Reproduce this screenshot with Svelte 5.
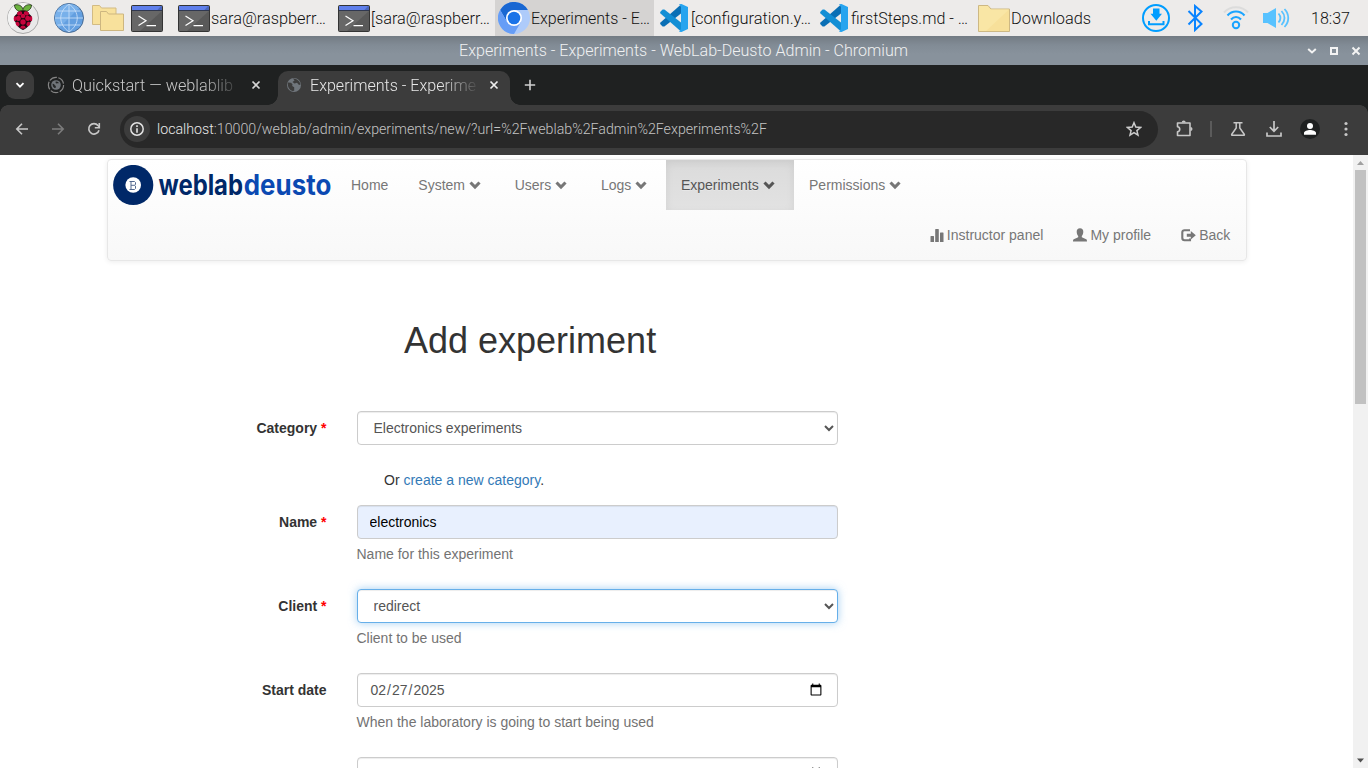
<script>
  const tasks = [
    { icon: 'term', label: 'sara@raspberr…', w: 115 },
    { icon: 'term', label: '[sara@raspberr…', w: 119 },
    { icon: 'chromium', label: 'Experiments - E…', w: 119, active: true },
    { icon: 'code', label: '[configuration.y…', w: 120 },
    { icon: 'code', label: 'firstSteps.md - …', w: 117 },
    { icon: 'folder', label: 'Downloads', w: 80 }
  ];
  const nav = [
    { label: 'Home' },
    { label: 'System', menu: true },
    { label: 'Users', menu: true },
    { label: 'Logs', menu: true },
    { label: 'Experiments', menu: true, active: true },
    { label: 'Permissions', menu: true }
  ];
</script>

{#snippet term()}
  <svg width="32" height="28" viewBox="0 0 32 28">
    <rect x=".5" y=".5" width="31" height="26" rx="1" fill="#595959" stroke="#343434" />
    <path d="M1 6h30L9 26H1z" fill="#676767" />
    <rect x="1" y="1" width="30" height="4.5" fill="#4a66bd" />
    <path d="M1 1h29l-4 4.500H1z" fill="#6080ec" />
    <path d="M1 5.500h30" stroke="#303850" />
    <path d="M7.500 11l7.500 4.700-7.500 4.700M15.500 20.700H25" fill="none" stroke="#fff" stroke-width="1.200" />
  </svg>
{/snippet}

{#snippet taskIcon(name)}
  {#if name === 'term'}
    {@render term()}
  {:else if name === 'chromium'}
    <svg width="32" height="32" viewBox="0 0 32 32">
      <circle cx="16" cy="16" r="16" fill="#aecbfa" />
      <path d="M2.140 8A16 16 0 0 1 29.900 8H16z" fill="#1967d2" />
      <path d="M2.140 8L9.100 20 16 8h13.900" fill="#1967d2" />
      <path d="M2.140 8A16 16 0 0 0 16 32l6.900-12-13.800 0z" fill="#669df6" />
      <circle cx="16" cy="16" r="8" fill="#fff" />
      <circle cx="16" cy="16" r="6.300" fill="#1a73e8" />
    </svg>
  {:else if name === 'code'}
    <svg width="32" height="32" viewBox="0 0 32 32">
      <path d="M23 2.500L2.200 20.700v1.400l2.400 2.300 1.800.1L23 11.500z" fill="#0a6fb5" />
      <path d="M23 29.500L2.200 11.300V9.900l2.400-2.300 1.800-.1L23 20.500z" fill="#138fd5" />
      <path d="M21 2.200L23.500 2l6.500 3v22l-6.500 3-2.500-.2L23 27V5z" fill="#27a4ef" />
    </svg>
  {:else}
    <svg width="32" height="28" viewBox="0 0 32 28">
      <path d="M.500 26.500V.500h9.500l3 3.500h18.500v22.500z" fill="#f7e09a" stroke="#cdb883" />
      <path d="M1 1h8.500l3 3.500H31L8 26H1z" fill="#f9e6a5" />
    </svg>
  {/if}
{/snippet}

{#snippet chevron()}
  <svg class="glyph drop" width="14" height="14" viewBox="0 0 14 14"><path d="M1.500 4.500l4.500 4.500 4.500-4.500" fill="none" stroke="currentColor" stroke-width="3.100" /></svg>
{/snippet}

{#snippet earth(cls)}
  <svg class={cls} width="16" height="16" viewBox="0 0 16 16">
    <circle cx="8" cy="8" r="7" fill="#70767c" />
    <path d="M2 5.500l3 .3 1.500 1.500-.3 1.700 2 1.200v3.500L6.500 14C3.500 13 1.300 10 2 5.500zM7 1.500l1.500 2-2 1.500 2 1.500 2.500-.8 2 2.300 1.500-.5C14 4.500 11 1.300 7 1.500z" fill="#3c3c3c" />
  </svg>
{/snippet}

<div class="screen">
  <header class="taskbar">
    <div class="launchers">
      <svg class="menu" width="32" height="32" viewBox="0 0 32 32">
        <circle cx="16" cy="16" r="15.500" fill="#e9e9e9" stroke="#a9a9a9" />
        <path d="M16 .900A15.100 15.100 0 0 0 5 26.500L26.500 5A15 15 0 0 0 16 .900z" fill="#f2f2f2" />
        <path d="M15.500 9.500C12 9.800 7.500 8 7.500 3c4-1 7.500.500 8.500 4.500C17 3.500 20.500 2 24.500 3c0 5-4.500 6.800-8 6.500z" fill="#6cb33f" stroke="#1d2a12" stroke-width=".8" />
        <path d="M16 8.300c3.500 0 5.500 1.600 6.500 4 2.600 1.400 3.600 5.500 1 8-1 3.600-4.500 6.700-7.500 7.700-3-1-6.500-4.100-7.500-7.700-2.600-2.500-1.600-6.600 1-8 1-2.400 3-4 6.500-4z" fill="#1f0710" />
        <g fill="#c7053d">
          <ellipse cx="12.600" cy="11.400" rx="2.700" ry="2" transform="rotate(-25 12.600 11.400)" />
          <ellipse cx="19.400" cy="11.400" rx="2.700" ry="2" transform="rotate(25 19.400 11.400)" />
          <circle cx="16" cy="14" r="2.300" />
          <ellipse cx="11.300" cy="16.300" rx="2.500" ry="2.600" />
          <ellipse cx="20.700" cy="16.300" rx="2.500" ry="2.600" />
          <ellipse cx="7.900" cy="16.700" rx="1.200" ry="2.600" />
          <ellipse cx="24.100" cy="16.700" rx="1.200" ry="2.600" />
          <circle cx="16" cy="20" r="2.700" />
          <ellipse cx="10.600" cy="21.900" rx="1.800" ry="2.300" transform="rotate(-30 10.600 21.900)" />
          <ellipse cx="21.400" cy="21.900" rx="1.800" ry="2.300" transform="rotate(30 21.400 21.900)" />
          <ellipse cx="16" cy="25.200" rx="2.500" ry="1.600" />
        </g>
      </svg>
      <svg class="web" width="30" height="30" viewBox="0 0 30 30">
        <circle cx="15" cy="15" r="14.500" fill="#639fe0" stroke="#4a6b92" />
        <path d="M15 1A14 14 0 0 0 5 25L25 5A14 14 0 0 0 15 1z" fill="#78b0ea" />
        <path d="M15 1v28M1 15h28M3.500 8h23M3.500 22h23M15 1c-11 8-11 20 0 28M15 1c11 8 11 20 0 28" fill="none" stroke="#cfe3fa" stroke-width=".8" />
      </svg>
      <svg class="files" width="32" height="28" viewBox="0 0 32 28">
        <path d="M.500 19.500V.500h7l2 2.500h14.500v16.500z" fill="#f8e19c" stroke="#d2bb84" />
        <path d="M8.500 25.500v-19h6l2 2.500h15v16.500z" fill="#f8e19c" stroke="#cdb680" />
      </svg>
      <div class="shell">{@render term()}</div>
    </div>
    <nav class="tasks">
      {#each tasks as t}
        <div class="task" class:active={t.active}>
          <span class="ticon" class:low={t.icon === 'term' || t.icon === 'folder'}>{@render taskIcon(t.icon)}</span>
          <svg class="ttext" width="122" height="34"><text x="0" y="23" textLength={t.w} lengthAdjust="spacingAndGlyphs">{t.label}</text></svg>
        </div>
      {/each}
    </nav>
    <div class="tray">
      <svg width="28" height="28" viewBox="0 0 28 28">
        <circle cx="14" cy="14" r="13" fill="none" stroke="#009dff" stroke-width="2" />
        <path d="M11 4.500h6.500v5.200h2.500l-5.700 7-5.800-7H11z" fill="#009dff" />
        <path d="M7 17v3.200h14.500V17" fill="none" stroke="#009dff" stroke-width="2" />
      </svg>
      <svg class="bt" width="16" height="28" viewBox="0 0 16 28"><path d="M1.500 7l13 13L8 26V2l6.500 5.500L1.500 20.500" fill="none" stroke="#0a84ff" stroke-width="2" /></svg>
      <svg class="wifi" width="26" height="26" viewBox="0 0 26 26" fill="none">
        <path d="M1 7.500C7 .500 19 .500 25 7.500" stroke="#dcdcdc" stroke-width="2" />
        <path d="M4.500 10.500C9 5 17 5 21.500 10.500M8 14.500c3-3.500 7-3.500 10 0" stroke="#1aa4ff" stroke-width="2" />
        <circle cx="13" cy="20" r="3.200" stroke="#1aa4ff" stroke-width="2" />
      </svg>
      <svg class="vol" width="27" height="22" viewBox="0 0 27 22">
        <path d="M0 6h4.500L13 1v20l-8.500-5H0z" fill="#58c2ff" />
        <path d="M15.500 6.500c2.400 2.800 2.400 6.200 0 9M18.500 4c4 4.200 4 9.800 0 14M21.500 2c5 5.200 5 12.800 0 18" fill="none" stroke="#58c2ff" stroke-width="1.800" />
      </svg>
      <svg class="clock" width="44" height="34"><text x="0" y="23" textLength="39" lengthAdjust="spacingAndGlyphs">18:37</text></svg>
    </div>
  </header>

  <div class="titlebar">
    <svg class="title" width="452" height="29"><text x="1" y="20" textLength="449" lengthAdjust="spacingAndGlyphs">Experiments - Experiments - WebLab-Deusto Admin - Chromium</text></svg>
    <div class="wm">
      <svg width="10" height="10" viewBox="0 0 10 10"><path d="M1.200 3l3.800 3.500L8.800 3" fill="none" stroke="#f3f3f3" stroke-width="2" /></svg>
      <svg width="10" height="10" viewBox="0 0 10 10"><rect x="2" y="2" width="6" height="6" fill="none" stroke="#f3f3f3" stroke-width="2" /></svg>
      <svg width="10" height="10" viewBox="0 0 10 10"><path d="M1.500 1.500l7 7m0-7l-7 7" stroke="#f3f3f3" stroke-width="2" /></svg>
    </div>
  </div>

  <div class="tabstrip">
    <button class="tabsearch" aria-label="Search tabs"><svg width="12" height="12" viewBox="0 0 12 12"><path d="M2.500 4.200L6 7.700l3.500-3.500" fill="none" stroke="#fff" stroke-width="1.800" /></svg></button>
    <div class="tab">
      <svg class="fav" width="18" height="18" viewBox="0 0 18 18">
        <circle cx="9" cy="9" r="7.600" fill="none" stroke="#858585" stroke-width="1.200" stroke-dasharray="8 1.500" />
        <circle cx="9" cy="9" r="4.800" fill="#70757a" />
        <path d="M5.500 7.800l1.500.2.800 1.200 1 .7v1.800L7.500 12 6 10.500zM8.500 5.500l.5.700-.8.600 1.300.8 2-.5.7.8C12 6.500 10.500 5 8.500 5.500z" fill="#252727" />
      </svg>
      <svg class="tabtext dim" width="164" height="28"><text x="0" y="20" textLength="161" lengthAdjust="spacingAndGlyphs">Quickstart — weblablib</text></svg>
      <svg class="x" width="10" height="10" viewBox="0 0 10 10"><path d="M1.500 1.500l7 7m0-7l-7 7" stroke="#d5d5d5" stroke-width="1.700" /></svg>
    </div>
    <div class="tab current">
      {@render earth('fav2')}
      <svg class="tabtext" width="168" height="28"><text x="0" y="20" textLength="166" lengthAdjust="spacingAndGlyphs">Experiments - Experime</text></svg>
      <svg class="x" width="10" height="10" viewBox="0 0 10 10"><path d="M1.500 1.500l7 7m0-7l-7 7" stroke="#eee" stroke-width="1.700" /></svg>
    </div>
    <svg class="plus" width="12" height="12" viewBox="0 0 12 12"><path d="M6 .800v10.400M.800 6h10.400" stroke="#d0d0d0" stroke-width="1.600" /></svg>
  </div>

  <div class="toolbar">
    <svg class="back" width="14" height="14" viewBox="0 0 14 14"><path d="M13 7H2M7 1.800L1.800 7 7 12.200" fill="none" stroke="#c7c7c7" stroke-width="1.600" /></svg>
    <svg class="fwd" width="14" height="14" viewBox="0 0 14 14"><path d="M1 7h11M7 1.800L12.200 7 7 12.200" fill="none" stroke="#7c7c7c" stroke-width="1.600" /></svg>
    <svg class="reload" width="14" height="14" viewBox="0 0 14 14"><path d="M12 8.200A5.200 5.200 0 1 1 11 3.500L12.500 5" fill="none" stroke="#c7c7c7" stroke-width="1.700" /><path d="M12.300 1v4.700H7.800" fill="none" stroke="#c7c7c7" stroke-width="1.600" /></svg>
    <div class="omni">
      <span class="info"><svg width="14" height="14" viewBox="0 0 14 14"><circle cx="7" cy="7" r="6.200" fill="none" stroke="#e3e3e3" stroke-width="1.500" /><path d="M7 3.300v1.700M7 6.200v4.500" stroke="#e3e3e3" stroke-width="1.600" /></svg></span>
      <svg class="url" width="640" height="30"><text x="0" y="19.500" textLength="610" lengthAdjust="spacingAndGlyphs"><tspan fill="#e8e8e8">localhost</tspan>:10000/weblab/admin/experiments/new/?url=%2Fweblab%2Fadmin%2Fexperiments%2F</text></svg>
      <svg class="star" width="16" height="16" viewBox="0 0 16 16"><path d="M8 1.700l1.800 4.400 4.700.4-3.600 3.100 1.100 4.600-4-2.500-4 2.500 1.100-4.600-3.600-3.100 4.700-.4z" fill="none" stroke="#ccc" stroke-width="1.500" /></svg>
    </div>
    <svg class="ext" width="17" height="18" viewBox="0 0 17 18"><path d="M1.500 3H14v12.500H1.500v-3.700c3-.4 3-4.700 0-5.100z" fill="none" stroke="#c7c7c7" stroke-width="1.600" stroke-linejoin="round" /><path d="M5.700 2.500a2 2 0 0 1 4 0zM14.500 7a2 2 0 0 1 0 4z" fill="#c7c7c7" /></svg>
    <span class="sep"></span>
    <svg class="flask" width="16" height="16" viewBox="0 0 16 16"><path d="M3.500 1.800h9M6.200 2v5L1.800 13.200q-.6 1.100.7 1.100h11q1.300 0 .7-1.100L9.800 7V2" fill="none" stroke="#c7c7c7" stroke-width="1.500" /></svg>
    <svg class="dl" width="18" height="18" viewBox="0 0 18 18"><path d="M9 1v10M4.800 7L9 11.300 13.200 7M2 12.500V16h14v-3.500" fill="none" stroke="#c7c7c7" stroke-width="1.700" /></svg>
    <svg class="avatar" width="20" height="20" viewBox="0 0 20 20"><circle cx="10" cy="10" r="10" fill="#1f2121" /><circle cx="10" cy="7" r="3" fill="#fff" /><path d="M4 15.700V14c0-1.900 3.500-2.900 6-2.900s6 1 6 2.900v1.700z" fill="#fff" /></svg>
    <svg class="dots" width="4" height="16" viewBox="0 0 4 16" fill="#c7c7c7"><circle cx="2" cy="2.500" r="1.600" /><circle cx="2" cy="8" r="1.600" /><circle cx="2" cy="13.500" r="1.600" /></svg>
  </div>

  <div class="viewport">
    <main>
      <div class="navbar">
        <div class="row">
          <div class="brand">
            <svg width="226" height="42" viewBox="0 0 226 42">
              <circle cx="20.200" cy="20" r="20.100" fill="#002868" />
              <circle cx="20.200" cy="20" r="7.800" fill="#fff" />
              <path d="M18 16.500h3.500l1 1v2l-1 .8 1 .8v2.400l-1 1H18zM18 20.300h3.500M16.500 16.500H18M16.500 24.500H18" fill="none" stroke="#53698f" />
              <g class="word" transform="scale(1 1.040)">
                <text x="45.500" y="28.600" textLength="84.500" lengthAdjust="spacingAndGlyphs" fill="#002868">weblab</text>
                <text x="130.800" y="28.600" textLength="87.500" lengthAdjust="spacingAndGlyphs" fill="#0b49b2">deusto</text>
              </g>
            </svg>
          </div>
          {#each nav as n}
            <a class="item" class:active={n.active} href="#top">{n.label}{#if n.menu}{' '}{@render chevron()}{/if}</a>
          {/each}
        </div>
        <div class="row right">
          <a class="item" href="#top"><svg class="glyph side" width="14" height="14" viewBox="0 0 14 14" fill="currentColor"><path d="M.500 8.500q0-.500.500-.500h2.500q.500 0 .500.500V14H.500zM5.200 1.500q0-.500.500-.500h2.600q.500 0 .500.500V14H5.200zM10 5q0-.500.500-.500H13q.500 0 .500.500v9H10z" /></svg> Instructor panel</a>
          <a class="item" href="#top"><svg class="glyph side" width="14" height="14" viewBox="0 0 14 14" fill="currentColor"><path d="M7 .300c2.200 0 3.300 1.400 3.300 3.500 0 1.700-.7 3.300-1.500 4.200v1.200l4.400 2c.6.400.8 1 .8 2.300H0c0-1.300.2-1.900.8-2.300l4.400-2V8C4.400 7.100 3.700 5.500 3.700 3.800 3.700 1.700 4.800.300 7 .300z" /></svg> My profile</a>
          <a class="item" href="#top"><svg class="glyph side" width="15" height="14" viewBox="0 0 15 14"><path d="M9 2.200H3.500Q1.300 2.200 1.300 4.200V10q0 2.200 2.200 2.200H9V10.500" fill="none" stroke="currentColor" stroke-width="2.100" /><path d="M5.800 5.800h4V3l5 4.300-5 4.300V8.800h-4z" fill="currentColor" /></svg> Back</a>
        </div>
      </div>

      <h1>Add experiment</h1>

      <form>
        <div class="field">
          <label for="cat">Category <b>*</b></label>
          <div class="ctl">
            <select id="cat"><option>Electronics experiments</option></select>
            <p class="alt">Or <a href="#top">create a new category</a>.</p>
          </div>
        </div>
        <div class="field">
          <label for="name">Name <b>*</b></label>
          <div class="ctl"><input id="name" class="filled" type="text" value="electronics" /><span class="help">Name for this experiment</span></div>
        </div>
        <div class="field">
          <label for="client">Client <b>*</b></label>
          <div class="ctl"><select id="client" class="focus"><option>redirect</option></select><span class="help">Client to be used</span></div>
        </div>
        <div class="field">
          <label for="start">Start date</label>
          <div class="ctl"><input id="start" type="date" value="2025-02-27" /><span class="help">When the laboratory is going to start being used</span></div>
        </div>
        <div class="field">
          <span></span>
          <div class="ctl"><input type="date" value="2025-02-27" aria-label="End date" /></div>
        </div>
      </form>
    </main>
    <div class="scrollbar">
      <svg width="15" height="15" viewBox="0 0 15 15"><path d="M4 10l3.500-4L11 10z" fill="#a0a0a0" /></svg>
      <div class="thumb"></div>
      <svg class="down" width="15" height="15" viewBox="0 0 15 15"><path d="M4 5.500h7L7.500 9.500z" fill="#505050" /></svg>
    </div>
  </div>
</div>

<style>
  :global(body) { margin: 0; overflow: hidden; }
  .screen { width: 1368px; height: 768px; overflow: hidden; display: flex; flex-direction: column; background: #fff; font-family: "Liberation Sans", Arial, sans-serif; }
  .screen * { box-sizing: border-box; }
  svg { display: block; flex: none; }
  .taskbar, .titlebar, .tabstrip, .toolbar { display: flex; flex: none; font: 300 16px Roboto, sans-serif; }
  .taskbar { height: 36px; background: #edebea; }
  .launchers { width: 175px; display: flex; padding-left: 7px; }
  .menu { margin-top: 2px; }
  .web { margin: 3px 0 0 15px; }
  .files { margin: 5px 0 0 8px; }
  .shell { margin: 5px 0 0 7px; }
  .tasks { display: flex; }
  .task { width: 160px; height: 36px; display: flex; align-items: center; padding-left: 3px; gap: 1px; }
  .task.active { background: linear-gradient(to right, #d5d3d2 159px, transparent 159px); }
  .ticon { width: 32px; }
  .ticon.low { padding-top: 2px; }
  .ttext, .clock { fill: #111; }
  .tray { display: flex; align-items: center; padding-left: 7px; }
  .bt { margin-left: 17px; }
  .wifi { margin: 0 0 0 20px; }
  .vol { margin-left: 14px; }
  .clock { margin-left: 21px; }
  .titlebar { height: 29px; background: linear-gradient(#737b83, #818b95 9px, #88929c 18px); }
  .title { margin-left: 458px; fill: #f0f1f2; }
  .wm { display: flex; gap: 12px; align-items: center; margin-left: 397px; }
  .tabstrip { height: 40px; background: #1f2121; }
  .tabsearch { width: 28px; height: 28px; margin: 6px 0 0 6px; padding: 0; border: 0; border-radius: 9px; background: #3c3c3c; display: grid; place-items: center; }
  .tab { display: flex; align-items: center; height: 40px; width: 244px; padding-left: 13px; }
  .tabtext { margin-left: 7px; fill: #e8e8e8; -webkit-mask-image: linear-gradient(to right, #000 130px, transparent 170px); mask-image: linear-gradient(to right, #000 130px, transparent 170px); }
  .dim { fill: #c9c9c9; }
  .x { margin-left: 15px; }
  .current { position: relative; width: 232px; height: 34px; margin-top: 6px; padding: 0 0 6px 8px; border-radius: 10px 10px 0 0; background: #3c3c3c; }
  .current::before, .current::after { content: ""; position: absolute; bottom: 0; width: 10px; height: 10px; }
  .current::before { left: -10px; background: radial-gradient(circle at 0 0, transparent 9.500px, #3c3c3c 10px); }
  .current::after { right: -10px; background: radial-gradient(circle at 100% 0, transparent 9.500px, #3c3c3c 10px); }
  .current .tabtext { margin-left: 8px; }
  .current .x { margin-left: 11px; }
  .plus { margin: 14px 0 0 14px; }
  .toolbar { height: 50px; align-items: center; padding: 0 0 2px 15px; background: radial-gradient(circle at 8px 8px, #3c3c3c 7.500px, #1f2121 8px) 0 0 / 8px 8px no-repeat, radial-gradient(circle at 0 8px, #3c3c3c 7.500px, #1f2121 8px) 100% 0 / 8px 8px no-repeat, #3c3c3c; }
  .fwd { margin-left: 22px; }
  .reload { margin-left: 22px; }
  .omni { width: 1038px; height: 37px; margin-left: 19px; border-radius: 19px; background: #282828; display: flex; align-items: center; padding-left: 4px; }
  .info { width: 26px; height: 26px; border-radius: 50%; background: #3c3c3c; display: grid; place-items: center; }
  .url { margin-left: 7px; font-size: 14.500px; font-weight: 300; fill: #c4c4c4; }
  .star { margin-left: 329px; }
  .ext { margin-left: 18px; }
  .sep { width: 2px; height: 16px; margin-left: 17px; background: #5b5b5b; }
  .flask { margin-left: 18px; }
  .dl { margin-left: 19px; }
  .avatar { margin-left: 17px; }
  .dots { margin-left: 24px; }
  .viewport { flex: 1; min-height: 0; display: flex; }
  main { width: 1353px; height: 613px; overflow: hidden; padding: 4px 0 0 107px; font-size: 14px; line-height: 20px; color: #333; }
  .navbar { width: 1140px; height: 102px; border: 1px solid #e7e7e7; border-radius: 4px; background: linear-gradient(#fff, #f8f8f8); box-shadow: inset 0 1px 0 rgba(255,255,255,.15), 0 1px 5px rgba(0,0,0,.075); }
  .row { display: flex; height: 50px; }
  .brand { width: 228px; padding: 5px 0 0 5px; }
  .word { font: 700 27px Inter, sans-serif; }
  .item { display: block; padding: 15px; color: #777; text-decoration: none; white-space: pre; text-shadow: 0 1px 0 rgba(255,255,255,.25); }
  .item.active { color: #555; background: linear-gradient(#dbdbdb, #e2e2e2); box-shadow: inset 0 3px 9px rgba(0,0,0,.075); padding-right: 15.700px; }
  .glyph { display: inline-block; vertical-align: -2px; }
  .drop { margin-right: 1.750px; }
  .side { margin-right: -.8px; }
  .right { justify-content: flex-end; padding-right: .7px; }
  h1 { margin: 60px 0 0 297px; font-size: 36px; line-height: 40px; font-weight: 500; }
  form { margin-top: 50px; }
  .field { display: grid; grid-template-columns: 219.500px 481px; column-gap: 30px; margin-bottom: 15px; }
  label { text-align: right; font-weight: 700; padding-top: 7px; }
  label b { color: #f00; }
  .ctl { min-height: 69px; }
  .ctl input, .ctl select { display: block; width: 481px; height: 34px; margin: 0; padding: 6px 12px; border: 1px solid #ccc; border-radius: 4px; background-color: #fff; color: #555; font: 14px/20px "Liberation Sans", Arial, sans-serif; box-shadow: inset 0 1px 1px rgba(0,0,0,.075); outline: 0; }
  .ctl .filled { background-color: #e8f0fe; color: #000; }
  .ctl .focus { border-color: #66afe9; box-shadow: inset 0 1px 1px rgba(0,0,0,.075), 0 0 8px rgba(102,175,233,.6); }
  .alt { margin: 25px 0 0 27.500px; }
  .alt a { color: #337ab7; text-decoration: none; }
  .help { display: block; margin-top: 5px; color: #737373; }
  .scrollbar { width: 15px; background: #f1f1f1; display: flex; flex-direction: column; }
  .thumb { width: 11px; height: 234px; margin-left: 2px; background: #c1c1c1; }
  .down { margin-top: auto; }
</style>
